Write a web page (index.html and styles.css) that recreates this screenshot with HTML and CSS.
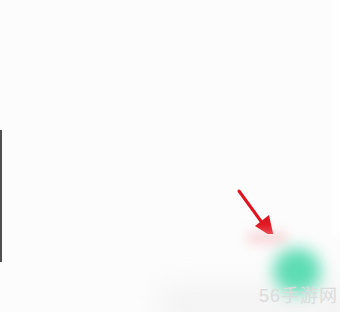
FILE: index.html
```html
<!DOCTYPE html>
<html>
<head>
<meta charset="utf-8">
<link rel="stylesheet" href="styles.css">
</head>
<body>
<div class="screen">
  <div class="content">
    <div class="edge"></div>
  </div>
  <div class="strip"></div>
  <svg class="arrow" width="60" height="60" viewBox="0 0 60 60">
    <line x1="9" y1="11" x2="33" y2="44" stroke="#e0141e" stroke-width="3" stroke-linecap="round"/>
    <polygon points="44,58 25,46 39,35" fill="#e0141e"/>
  </svg>
  <div class="cut"></div>
  <div class="smudge"></div>
  <div class="pink"></div>
  <div class="green"></div>
  <div class="mark">56手游网</div>
</div>
</body>
</html>
```
FILE: styles.css
```css
html, body {
  margin: 0;
  padding: 0;
  background: #fcfcfc;
}
.screen {
  position: relative;
  width: 340px;
  height: 312px;
  overflow: hidden;
  display: flex;
}
.content {
  flex: 1;
  display: flex;
  align-items: flex-start;
  padding-top: 130px;
}
.edge {
  width: 2px;
  height: 132px;
  background: #505050;
}
.strip {
  width: 8px;
  background: #fefefe;
}
.arrow {
  position: absolute;
  left: 230px;
  top: 180px;
}
.cut {
  position: absolute;
  left: 200px;
  top: 234px;
  width: 140px;
  height: 78px;
  background: linear-gradient(to right, rgba(252,252,252,0), #fcfcfc 25%);
}
.smudge {
  position: absolute;
  left: 160px;
  top: 285px;
  width: 200px;
  height: 40px;
  background: #ececec;
  filter: blur(14px);
  opacity: 0.55;
}
.pink {
  position: absolute;
  left: 248px;
  top: 232px;
  width: 38px;
  height: 12px;
  background: #f7b8bd;
  filter: blur(6px);
  opacity: 0.55;
}
.green {
  position: absolute;
  left: 273px;
  top: 248px;
  width: 48px;
  height: 46px;
  border-radius: 50%;
  background: #5edcb4;
  filter: blur(8px);
}
.mark {
  position: absolute;
  left: 259px;
  top: 285px;
  font-family: "Liberation Sans", "Noto Sans CJK SC", sans-serif;
  font-size: 18px;
  line-height: 22px;
  color: #dcdcdc;
  letter-spacing: 1px;
}
```
